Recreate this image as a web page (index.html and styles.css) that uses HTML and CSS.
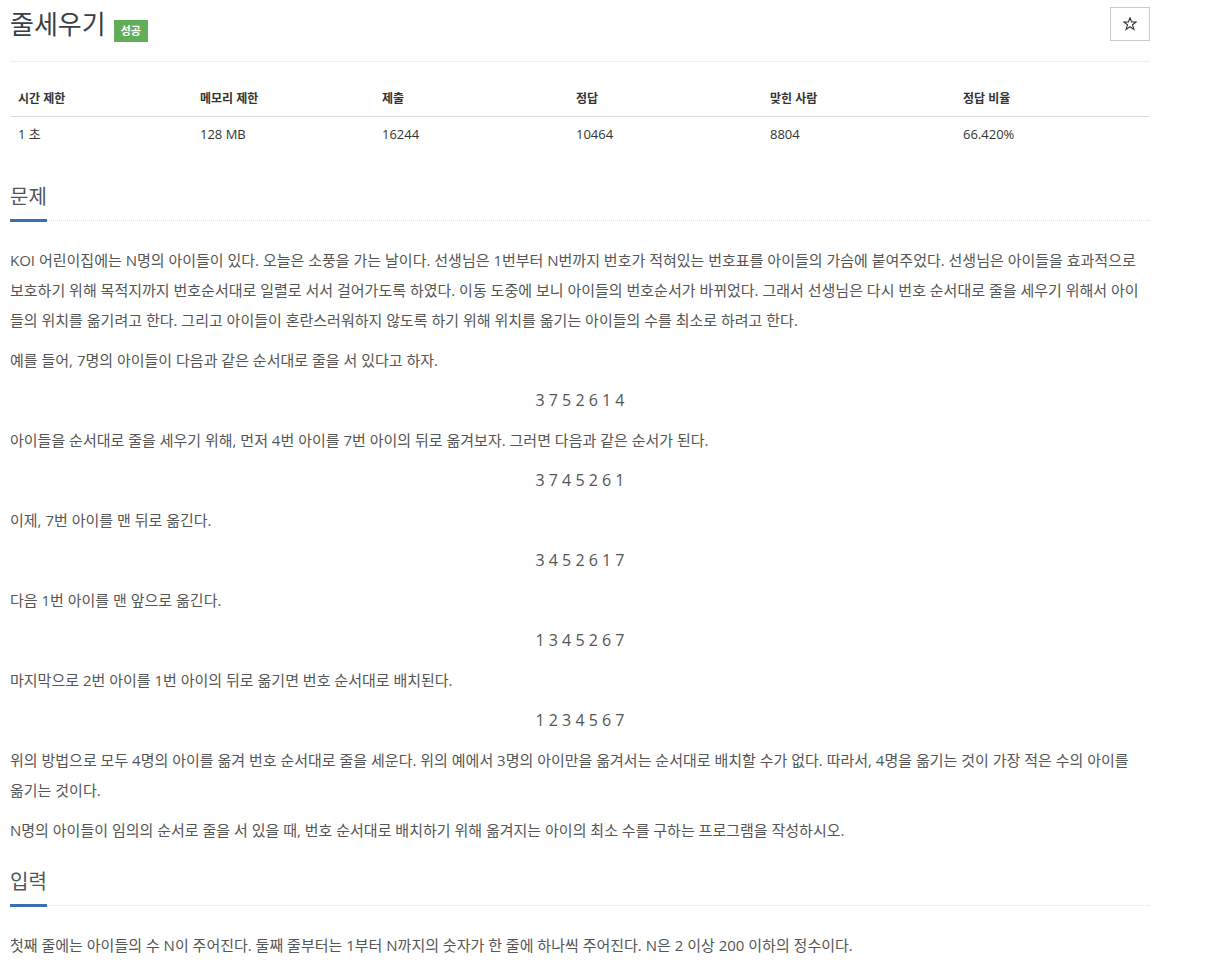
FILE: index.html
```html
<!DOCTYPE html>
<html lang="ko">
<head>
<meta charset="utf-8">
<title>줄세우기</title>
<link rel="stylesheet" href="styles.css">
</head>
<body>
<div class="page">
  <div class="page-header">
    <h1 class="title"><span class="title-text">줄세우기</span><span class="badge">성공</span></h1>
    <button class="star-btn" type="button" aria-label="즐겨찾기">
      <svg class="star" width="14" height="14" viewBox="0 0 14 14" aria-hidden="true">
        <polygon points="7,0.8 8.6,5 13.2,5 9.5,7.8 10.9,12.4 7,9.7 3.1,12.4 4.5,7.8 0.8,5 5.4,5" fill="none" stroke="#333" stroke-width="1.1" stroke-linejoin="miter"/>
      </svg>
    </button>
  </div>

  <table class="info">
    <thead>
      <tr>
        <th class="c1">시간 제한</th>
        <th class="c2">메모리 제한</th>
        <th class="c3">제출</th>
        <th class="c4">정답</th>
        <th class="c5">맞힌 사람</th>
        <th class="c6">정답 비율</th>
      </tr>
    </thead>
    <tbody>
      <tr>
        <td>1 초</td>
        <td>128 MB</td>
        <td>16244</td>
        <td>10464</td>
        <td>8804</td>
        <td>66.420%</td>
      </tr>
    </tbody>
  </table>

  <section class="section">
    <div class="headline"><h2>문제</h2></div>
    <div class="text">
      <p>KOI 어린이집에는 N명의 아이들이 있다. 오늘은 소풍을 가는 날이다. 선생님은 1번부터 N번까지 번호가 적혀있는 번호표를 아이들의 가슴에 붙여주었다. 선생님은 아이들을 효과적으로 보호하기 위해 목적지까지 번호순서대로 일렬로 서서 걸어가도록 하였다. 이동 도중에 보니 아이들의 번호순서가 바뀌었다. 그래서 선생님은 다시 번호 순서대로 줄을 세우기 위해서 아이들의 위치를 옮기려고 한다. 그리고 아이들이 혼란스러워하지 않도록 하기 위해 위치를 옮기는 아이들의 수를 최소로 하려고 한다.</p>
      <p>예를 들어, 7명의 아이들이 다음과 같은 순서대로 줄을 서 있다고 하자.</p>
      <p class="seq">3 7 5 2 6 1 4</p>
      <p>아이들을 순서대로 줄을 세우기 위해, 먼저 4번 아이를 7번 아이의 뒤로 옮겨보자. 그러면 다음과 같은 순서가 된다.</p>
      <p class="seq">3 7 4 5 2 6 1</p>
      <p>이제, 7번 아이를 맨 뒤로 옮긴다.</p>
      <p class="seq">3 4 5 2 6 1 7</p>
      <p>다음 1번 아이를 맨 앞으로 옮긴다.</p>
      <p class="seq">1 3 4 5 2 6 7</p>
      <p>마지막으로 2번 아이를 1번 아이의 뒤로 옮기면 번호 순서대로 배치된다.</p>
      <p class="seq">1 2 3 4 5 6 7</p>
      <p class="keep">위의 방법으로 모두 4명의 아이를 옮겨 번호 순서대로 줄을 세운다. 위의 예에서 3명의 아이만을 옮겨서는 순서대로 배치할 수가 없다. 따라서, 4명을 옮기는 것이 가장 적은 수의 아이를 옮기는 것이다.</p>
      <p>N명의 아이들이 임의의 순서로 줄을 서 있을 때, 번호 순서대로 배치하기 위해 옮겨지는 아이의 최소 수를 구하는 프로그램을 작성하시오.</p>
    </div>
  </section>

  <section class="section">
    <div class="headline"><h2>입력</h2></div>
    <div class="text">
      <p>첫째 줄에는 아이들의 수 N이 주어진다. 둘째 줄부터는 1부터 N까지의 숫자가 한 줄에 하나씩 주어진다. N은 2 이상 200 이하의 정수이다.</p>
    </div>
  </section>
</div>
</body>
</html>
```

FILE: styles.css
```css
html, body {
  margin: 0;
  padding: 0;
  background: #fff;
}

body {
  font-family: "Open Sans", "Noto Sans CJK KR", sans-serif;
  color: #555;
}

.page {
  width: 1140px;
  padding-left: 10px;
}

.page-header {
  display: flex;
  justify-content: space-between;
  align-items: flex-start;
  padding-top: 7px;
  height: 54px;
  border-bottom: 1px solid #eee;
}

.title {
  margin: 0;
  display: flex;
  align-items: flex-end;
  gap: 8px;
  height: 34px;
  font-weight: normal;
}

.title-text {
  font-size: 26px;
  line-height: 34px;
  color: #3b3e45;
}

.badge {
  display: inline-block;
  height: 22px;
  line-height: 22px;
  padding: 0 7px;
  background: #62ad57;
  color: #fff;
  font-size: 11px;
  font-weight: bold;
  margin-bottom: -1px;
}

.star-btn {
  width: 40px;
  height: 34px;
  margin: 0;
  padding: 0;
  border: 1px solid #ccc;
  background: #fff;
  display: flex;
  align-items: center;
  justify-content: center;
  cursor: pointer;
}

.star {
  display: block;
}

.info {
  width: 1140px;
  border-collapse: collapse;
  table-layout: fixed;
  margin-top: 20px;
  margin-bottom: 32px;
  color: #333;
}

.info th,
.info td {
  text-align: left;
  padding: 8px;
  line-height: 18px;
}

.info th {
  font-size: 12px;
  font-weight: bold;
  border-bottom: 1px solid #ddd;
}

.info td {
  font-size: 13px;
}

.c1 { width: 166px; }
.c2 { width: 166px; }
.c3 { width: 178px; }
.c4 { width: 178px; }
.c5 { width: 177px; }
.c6 { width: 179px; }

.section {
  margin-top: 23px;
}

.headline {
  border-bottom: 1px dotted #ddd;
  margin-bottom: 24px;
}

.headline h2 {
  display: inline-block;
  margin: 0 0 -2px 0;
  padding-bottom: 8px;
  font-size: 20px;
  line-height: 28px;
  font-weight: normal;
  color: #50545c;
  border-bottom: 3px solid #3a6fb5;
}

.text p {
  margin: 0 0 10px 0;
  font-size: 15px;
  line-height: 30px;
  color: #555;
}

.text p.keep {
  word-break: keep-all;
}

.text p.seq {
  text-align: center;
  font-size: 16px;
}
```
